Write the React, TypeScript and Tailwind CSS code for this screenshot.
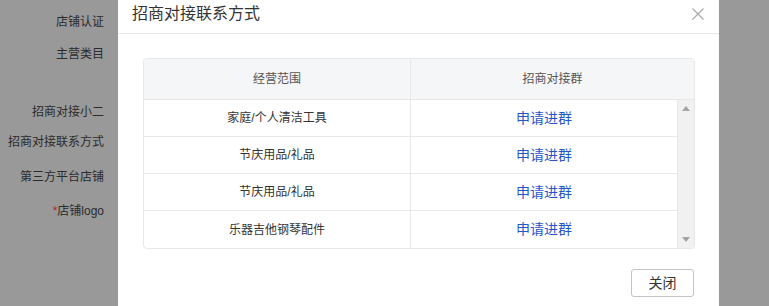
const labels = [
  { text: "店铺认证", mt: "mt-[14px]" },
  { text: "主营类目", mt: "mt-[16px]" },
  { text: "招商对接小二", mt: "mt-[42px]" },
  { text: "招商对接联系方式", mt: "mt-[14px]" },
  { text: "第三方平台店铺", mt: "mt-[19px]" },
  { text: "店铺logo", mt: "mt-[18px]", required: true },
];

const rows = ["家庭/个人清洁工具", "节庆用品/礼品", "节庆用品/礼品", "乐器吉他钢琴配件"];

const App = () => {
  return (
    <div
      className="relative w-[769px] h-[306px] overflow-hidden bg-[#999999]"
      style={{ fontFamily: '"Liberation Sans", "Noto Sans CJK SC", sans-serif' }}
    >
      {/* page behind the mask */}
      <div className="flex flex-col w-[104px] text-right text-[12px] leading-[16px] text-[#2b2b2b]">
        {labels.map(({ text, mt, required }) => (
          <p key={text} className={mt}>
            {required && <span className="text-[#b3262b]">*</span>}
            {text}
          </p>
        ))}
      </div>

      {/* dialog */}
      <div className="absolute left-[118px] top-0 w-[601px] h-[340px] bg-white flex flex-col">
        <div className="flex items-center justify-between h-[34px] pb-[6px] pl-[14px] pr-[15px] border-b border-[#e8e8e8]">
          <p className="text-[16px] text-[#333]">招商对接联系方式</p>
          <svg width="12" height="12" viewBox="0 0 12 12">
            <path d="M0.5 0.5 L11.5 11.5 M11.5 0.5 L0.5 11.5" stroke="#a8a8a8" strokeWidth="1.1" />
          </svg>
        </div>

        <div className="px-[25px] pt-[24px]">
          <div className="w-[552px] border border-[#e8e8e8] rounded-[4px] overflow-hidden text-[12px] text-[#333]">
            <div className="flex h-[41px] bg-[#f5f6f8] border-b border-[#e8e8e8] text-[#555]">
              <div className="w-[267px] flex items-center justify-center border-r border-[#e8e8e8]">经营范围</div>
              <div className="flex-1 flex items-center justify-center">招商对接群</div>
            </div>
            <div className="flex">
              <div className="flex-1 flex flex-col">
                {rows.map((r, i) => (
                  <div
                    key={i}
                    className={`flex h-[37px] ${i < rows.length - 1 ? "border-b border-[#e8e8e8]" : ""}`}
                  >
                    <div className="w-[267px] flex items-center justify-center border-r border-[#e8e8e8]">{r}</div>
                    <div className="flex-1 flex items-center justify-center text-[14px] text-[#2655c8]">申请进群</div>
                  </div>
                ))}
              </div>
              <div className="w-[17px] bg-[#f1f1f1] flex flex-col items-center justify-between py-[6px] border-l border-[#e8e8e8]">
                <svg width="8" height="5" viewBox="0 0 8 5">
                  <path d="M4 0 L8 5 L0 5 Z" fill="#a3a3a3" />
                </svg>
                <svg width="8" height="5" viewBox="0 0 8 5">
                  <path d="M0 0 L8 0 L4 5 Z" fill="#a3a3a3" />
                </svg>
              </div>
            </div>
          </div>
        </div>

        <div className="flex justify-end px-[25px] pt-[20px]">
          <button className="w-[63px] h-[28px] border border-[#c4c4c4] rounded-[3px] text-[14px] text-[#333] bg-white">
            关闭
          </button>
        </div>
      </div>
    </div>
  );
};

export default App;
